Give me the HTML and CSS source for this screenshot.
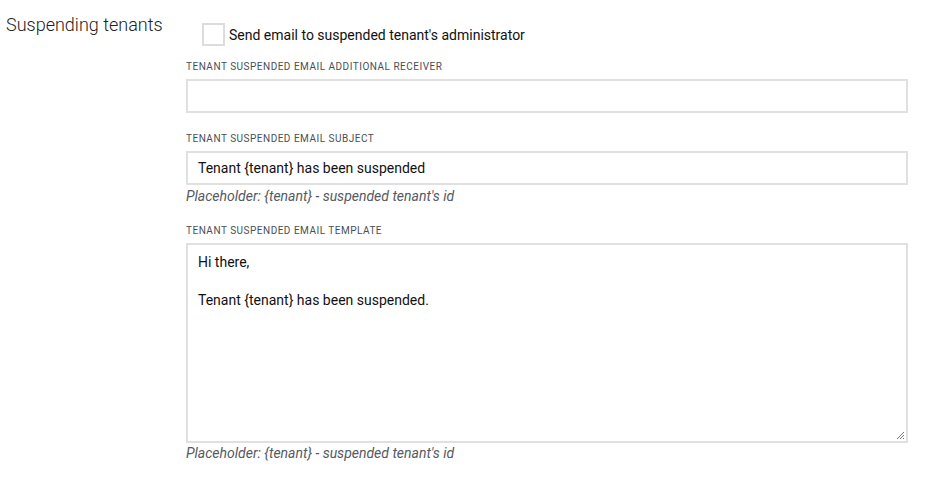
FILE: index.html
```html
<!DOCTYPE html>
<html>
<head>
<meta charset="utf-8">
<link rel="stylesheet" href="styles.css">
</head>
<body>
<div class="section">
  <div class="section-title">Suspending tenants</div>
  <div class="section-body">
    <label class="check">
      <span class="box"></span>
      <span class="check-label">Send email to suspended tenant's administrator</span>
    </label>
    <div class="field field-receiver">
      <div class="field-label">Tenant suspended email additional receiver</div>
      <div class="input"></div>
    </div>
    <div class="field field-subject">
      <div class="field-label">Tenant suspended email subject</div>
      <div class="input">Tenant {tenant} has been suspended</div>
      <div class="hint">Placeholder: {tenant} - suspended tenant's id</div>
    </div>
    <div class="field field-template">
      <div class="field-label">Tenant suspended email template</div>
      <div class="textarea">
        <div>Hi there,</div>
        <div>&nbsp;</div>
        <div>Tenant {tenant} has been suspended.</div>
        <svg class="grip" width="9" height="9" viewBox="0 0 9 9"><path d="M8 1 L1 8 M8 4 L4 8 M8 7 L7 8" stroke="#777" stroke-width="1" fill="none"/></svg>
      </div>
      <div class="hint">Placeholder: {tenant} - suspended tenant's id</div>
    </div>
  </div>
</div>
</body>
</html>
```
FILE: styles.css
```css
html, body { margin: 0; padding: 0; background: #fff; }
body { font-family: Roboto, "Noto Sans", sans-serif; color: #111; }
.section { display: flex; }
.section-title {
  width: 180px;
  padding-left: 6px;
  padding-top: 13px;
  font-size: 18px;
  font-weight: 300;
  color: #222;
  line-height: 24px;
}
.section-body { width: 722px; display: flex; flex-direction: column; }
.check { display: flex; align-items: center; margin-top: 23px; margin-left: 16px; }
.box {
  width: 19px; height: 19px;
  border: 2px solid #dcdcdc;
  background: #fff;
  margin-right: 4px;
}
.check-label { font-size: 14px; line-height: 18px; color: #111; }
.field { display: flex; flex-direction: column; }
.field-label {
  text-transform: uppercase;
  font-size: 10px;
  letter-spacing: 0.5px;
  color: #4a4f57;
  line-height: 12px;
  margin-bottom: 6px;
}
.field-receiver .field-label { margin-top: 15px; }
.field-subject .field-label { margin-top: 20px; }
.field-template .field-label { margin-top: 20px; }
.input {
  height: 30px;
  border: 2px solid #e0e0e0;
  padding: 0 10px;
  font-size: 14px;
  line-height: 30px;
  color: #111;
}
.hint {
  font-style: italic;
  font-size: 14px;
  color: #555a62;
  line-height: 18px;
  margin-top: 2px;
}
.field-template .hint { margin-top: 1px; }
.textarea {
  position: relative;
  height: 180px;
  border: 2px solid #e0e0e0;
  padding: 8px 10px;
  font-size: 14px;
  line-height: 19px;
  color: #111;
}
.grip { position: absolute; right: 1px; bottom: 1px; }
```
